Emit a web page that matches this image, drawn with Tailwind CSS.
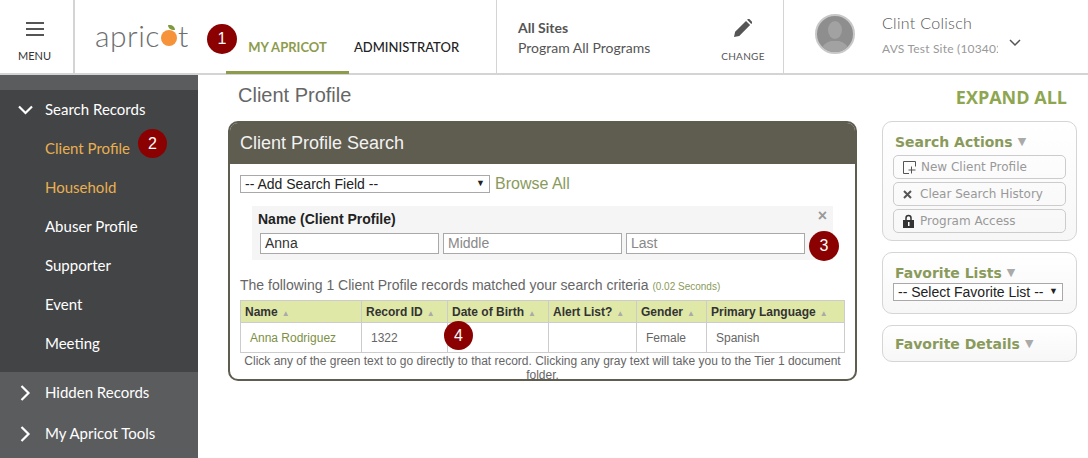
<!DOCTYPE html>
<html lang="en">
<head>
<meta charset="UTF-8">
<title>Client Profile</title>
<script src="https://cdn.jsdelivr.net/npm/@tailwindcss/browser@4"></script>
</head>
<body class="bg-white w-[1088px] h-[458px] overflow-hidden font-['Lato',sans-serif]">
    <!-- Header -->
    <header class="flex h-[75px] border-b-2 border-[#d4d4d4] relative">
        <div class="w-[75px] shrink-0 border-r-2 border-[#d4d4d4] flex flex-col items-center pt-[22px] pr-[4px]">
            <svg width="18" height="14" viewBox="0 0 18 14"><path d="M0 1h18M0 7h18M0 13h18" stroke="#555" stroke-width="2"/></svg>
            <span class="text-[11px] text-[#333] mt-[13px] leading-[14px]">MENU</span>
        </div>
        <div class="w-[151px] shrink-0 pl-[20px] pt-[17px]">
            <div class="text-[30px] leading-[36px] font-light text-[#6d6e70] flex items-center tracking-[0.5px]">apric<span class="relative w-[16px] h-[16px] rounded-full bg-[#f5923a] mt-[6px] mx-[1px]"><span class="absolute -top-[5px] left-[7px] w-[7px] h-[5px] rounded-tr-full rounded-bl-full bg-[#7d9a3f]"></span></span>t</div>
        </div>
        <nav class="w-[271px] shrink-0 flex border-r border-[#d4d4d4] text-[13px] font-medium">
            <a class="w-[123px] text-center pt-[38px] border-b-[3px] border-[#8d9b4c] h-[74px] font-bold text-[#8d9b4c]">MY APRICOT</a>
            <a class="pl-[5px] pt-[38px] text-[#222]">ADMINISTRATOR</a>
        </nav>
        <div class="w-[287px] shrink-0 flex border-r border-[#d4d4d4] pl-[21px]">
            <div class="w-[203px] pt-[18px] text-[14px] leading-[20px] text-[#555]">
                <div class="font-bold">All Sites</div>
                <div>Program All Programs</div>
            </div>
            <div class="flex flex-col items-center pt-[19px] w-[44px]">
                <svg width="18" height="18" viewBox="0 0 24 24" fill="#555"><path d="M0 24l1.5-7L16 2.5l5.5 5.5L7 22.500zM17.500 1l1-1q1-.8 2 0l3.500 3.500q.8 1 0 2l-1 1z"/></svg>
                <span class="text-[10px] text-[#555] mt-[12px] leading-[14px] tracking-[0.3px]">CHANGE</span>
            </div>
        </div>
        <div class="flex-1 flex pl-[31px]">
            <div class="w-[40px] h-[40px] mt-[14px] rounded-full border-2 border-[#c8c8c8] bg-[#8e8e8e] overflow-hidden shrink-0">
                <svg width="36" height="36" viewBox="0 0 36 36" fill="#a2a2a2"><ellipse cx="18" cy="14" rx="7" ry="9"/><path d="M4 36q1-9 10-11h8q9 2 10 11z"/></svg>
            </div>
            <div class="w-[116px] ml-[27px] pt-[12px] overflow-hidden whitespace-nowrap">
                <div class="text-[16px] leading-[22px] font-light text-[#555] tracking-[0.3px]">Clint Colisch</div>
                <div class="text-[12px] leading-[16px] mt-[7px] text-[#999] tracking-[0.2px]">AVS Test Site (103402)</div>
            </div>
            <svg class="ml-[11px] mt-[39px]" width="12" height="8" viewBox="0 0 12 8"><path d="M1 1l5 5 5-5" stroke="#555" stroke-width="1.500" fill="none"/></svg>
        </div>
        <span class="absolute left-[207px] top-[24px] w-[30px] h-[30px] rounded-full bg-[#8b0000] text-white text-[16px] flex items-center justify-center font-['Liberation_Sans',sans-serif]">1</span>
    </header>

    <div class="flex h-[383px]">
        <!-- Sidebar -->
        <aside class="w-[198px] shrink-0 bg-[#5b5c5e] pt-[15px] text-[15px] text-white relative">
            <div class="bg-[#434446] h-[282px] pb-[8px]">
                <div class="h-[39px] flex items-center">
                    <svg class="ml-[18px] mr-[12px]" width="15" height="10" viewBox="0 0 15 10"><path d="M1 1.500l6.500 6.500L14 1.500" stroke="#fff" stroke-width="2.200" fill="none"/></svg>
                    Search Records
                </div>
                <div class="pl-[45px]">
                    <div class="h-[39px] flex items-center text-[#e9b050]">Client Profile</div>
                    <div class="h-[39px] flex items-center text-[#e9b050]">Household</div>
                    <div class="h-[39px] flex items-center">Abuser Profile</div>
                    <div class="h-[39px] flex items-center">Supporter</div>
                    <div class="h-[39px] flex items-center">Event</div>
                    <div class="h-[39px] flex items-center">Meeting</div>
                </div>
            </div>
            <div class="h-[41px] flex items-center">
                <svg class="ml-[20px] mr-[14px]" width="11" height="16" viewBox="0 0 11 16"><path d="M1.500 1l7 7-7 7" stroke="#fff" stroke-width="2.200" fill="none"/></svg>
                Hidden Records
            </div>
            <div class="h-[41px] flex items-center">
                <svg class="ml-[20px] mr-[14px]" width="11" height="16" viewBox="0 0 11 16"><path d="M1.500 1l7 7-7 7" stroke="#fff" stroke-width="2.200" fill="none"/></svg>
                My Apricot Tools
            </div>
            <span class="absolute left-[138px] top-[54px] w-[29px] h-[29px] rounded-full bg-[#8b0000] text-white text-[16px] flex items-center justify-center font-['Liberation_Sans',sans-serif]">2</span>
        </aside>

        <!-- Main -->
        <main class="w-[659px] shrink-0 pl-[30px] font-['Liberation_Sans',sans-serif]">
            <h1 class="pl-[10px] pt-[8px] text-[20px] leading-[24px] text-[#666]">Client Profile</h1>
            <section class="mt-[14px] w-[629px] h-[260px] border-2 border-[#5f5c50] rounded-[10px] overflow-hidden">
                <h2 class="h-[41px] bg-[#5f5c50] text-[#f2f2f2] text-[18px] leading-[41px] pl-[10px] -mt-[0px]">Client Profile Search</h2>
                <div class="flex items-center mt-[10px] ml-[10px] h-[20px]">
                    <div class="w-[250px] h-[18px] border border-[#a9a9a9] flex justify-between items-center pl-[4px] pr-[4px] text-[14px] text-[#222]">
                        <span>-- Add Search Field --</span><span class="text-[9px]">▼</span>
                    </div>
                    <a class="ml-[5px] text-[16px] text-[#8a9a5b]">Browse All</a>
                </div>
                <div class="relative ml-[22px] mt-[12px] w-[581px] h-[54px] bg-[#f5f5f5] pl-[6px] pt-[5px]">
                    <div class="text-[14px] leading-[17px] font-bold text-[#222]">Name (Client Profile)</div>
                    <span class="absolute right-[6px] top-[2px] text-[16px] leading-[16px] font-bold text-[#999]">×</span>
                    <div class="flex gap-[4px] mt-[5px] ml-[2px] text-[14px]">
                        <div class="w-[179px] h-[21px] border border-[#a9a9a9] bg-white pl-[4px] leading-[19px] text-[#333]">Anna</div>
                        <div class="w-[179px] h-[21px] border border-[#a9a9a9] bg-white pl-[4px] leading-[19px] text-[#888]">Middle</div>
                        <div class="w-[179px] h-[21px] border border-[#a9a9a9] bg-white pl-[4px] leading-[19px] text-[#888]">Last</div>
                    </div>
                    <span class="absolute left-[557px] top-[25px] w-[30px] h-[30px] rounded-full bg-[#8b0000] text-white text-[16px] flex items-center justify-center">3</span>
                </div>
                <p class="ml-[10px] mt-[16px] text-[14px] leading-[18px] text-[#666]">The following 1 Client Profile records matched your search criteria <span class="text-[10px] text-[#8a9a5b]">(0.02 Seconds)</span></p>
                <div class="relative ml-[10px] mt-[4px] w-[605px] text-[12px]">
                    <table class="w-[605px] table-fixed border-collapse">
                        <thead>
                            <tr class="h-[22px] bg-[#e0e8a8] text-[#333] text-left font-bold">
                                <th class="w-[121px] border border-[#ccc] pl-[4px]"><span class="mr-[4px]">Name</span><span class="text-[#aaa] text-[8px]">▲</span></th>
                                <th class="w-[86px] border border-[#ccc] pl-[4px]"><span class="mr-[4px]">Record ID</span><span class="text-[#aaa] text-[8px]">▲</span></th>
                                <th class="w-[101px] border border-[#ccc] pl-[4px]"><span class="mr-[4px]">Date of Birth</span><span class="text-[#aaa] text-[8px]">▲</span></th>
                                <th class="w-[88px] border border-[#ccc] pl-[4px]"><span class="mr-[4px]">Alert List?</span><span class="text-[#aaa] text-[8px]">▲</span></th>
                                <th class="w-[70px] border border-[#ccc] pl-[4px]"><span class="mr-[4px]">Gender</span><span class="text-[#aaa] text-[8px]">▲</span></th>
                                <th class="border border-[#ccc] pl-[4px]"><span class="mr-[4px]">Primary Language</span><span class="text-[#aaa] text-[8px]">▲</span></th>
                            </tr>
                        </thead>
                        <tbody>
                            <tr class="h-[30px] text-[#666]">
                                <td class="border border-[#ccc] pl-[9px] text-[#7d8f45]">Anna Rodriguez</td>
                                <td class="border border-[#ccc] pl-[9px]">1322</td>
                                <td class="border border-[#ccc]"></td>
                                <td class="border border-[#ccc]"></td>
                                <td class="border border-[#ccc] pl-[9px]">Female</td>
                                <td class="border border-[#ccc] pl-[9px]">Spanish</td>
                            </tr>
                        </tbody>
                    </table>
                    <span class="absolute left-[204px] top-[21px] w-[29px] h-[29px] rounded-full bg-[#8b0000] text-white text-[16px] flex items-center justify-center">4</span>
                    <p class="text-center text-[12px] leading-[14px] text-[#666] mt-[1px]">Click any of the green text to go directly to that record. Clicking any gray text will take you to the Tier 1 document folder.</p>
                </div>
            </section>
        </main>

        <!-- Right column -->
        <aside class="w-[195px] ml-[25px] shrink-0">
            <div class="text-right pr-[10px] pt-[10px] text-[18px] leading-[24px] font-bold text-[#8fa650] font-['Open_Sans',sans-serif] mb-[12px]">EXPAND ALL</div>
            <div class="h-[120px] border border-[#d5d5d5] rounded-[10px] bg-gradient-to-b from-white to-[#f7f7f7] px-[10px] pt-[10px] font-['DejaVu_Sans',sans-serif]">
                <div class="text-[14px] leading-[20px] font-bold text-[#8a9a5b] pl-[2px] flex items-center">Search Actions<span class="ml-[5px] text-[#aaa] text-[11px]">▼</span></div>
                <div class="mt-[3px] flex flex-col gap-[3px] text-[12px] text-[#999]">
                    <div class="h-[24px] border border-[#ccc] rounded-[5px] flex items-center pl-[9px]">
                        <svg class="mr-[5px]" width="13" height="13" viewBox="0 0 13 13" fill="none" stroke="#555"><path d="M6 12.500H.5V.5h12v5M8.500 5.500v7M5.500 9h7"/></svg>New Client Profile</div>
                    <div class="h-[24px] border border-[#ccc] rounded-[5px] flex items-center pl-[9px]">
                        <svg class="mr-[8px]" width="9" height="9" viewBox="0 0 9 9" stroke="#555" stroke-width="2"><path d="M1 1l7 7M8 1l-7 7"/></svg>Clear Search History</div>
                    <div class="h-[24px] border border-[#ccc] rounded-[5px] flex items-center pl-[9px]">
                        <svg class="mr-[6px]" width="11" height="14" viewBox="0 0 11 14"><path d="M3 6V4a2.500 2.500 0 015 0v2" stroke="#333" stroke-width="1.500" fill="none"/><rect y="6" width="11" height="8" fill="#333"/><rect x="5" y="8" width="1.500" height="4" fill="#fff"/></svg>Program Access</div>
                </div>
            </div>
            <div class="mt-[11px] h-[62px] border border-[#d5d5d5] rounded-[10px] bg-gradient-to-b from-white to-[#f7f7f7] px-[10px] pt-[10px]">
                <div class="text-[14px] leading-[20px] font-bold text-[#8a9a5b] pl-[2px] flex items-center font-['DejaVu_Sans',sans-serif]">Favorite Lists<span class="ml-[5px] text-[#aaa] text-[11px]">▼</span></div>
                <div class="w-[170px] h-[18px] border border-[#a9a9a9] bg-white flex justify-between items-center pl-[4px] pr-[4px] text-[14px] text-[#222] font-['Liberation_Sans',sans-serif]">
                    <span>-- Select Favorite List --</span><span class="text-[9px]">▼</span>
                </div>
            </div>
            <div class="mt-[11px] h-[37px] border border-[#d5d5d5] rounded-[10px] bg-gradient-to-b from-white to-[#f7f7f7] px-[10px] pt-[8px]">
                <div class="text-[14px] leading-[20px] font-bold text-[#8a9a5b] pl-[2px] flex items-center font-['DejaVu_Sans',sans-serif]">Favorite Details<span class="ml-[5px] text-[#aaa] text-[11px]">▼</span></div>
            </div>
        </aside>
    </div>
</body>
</html>
